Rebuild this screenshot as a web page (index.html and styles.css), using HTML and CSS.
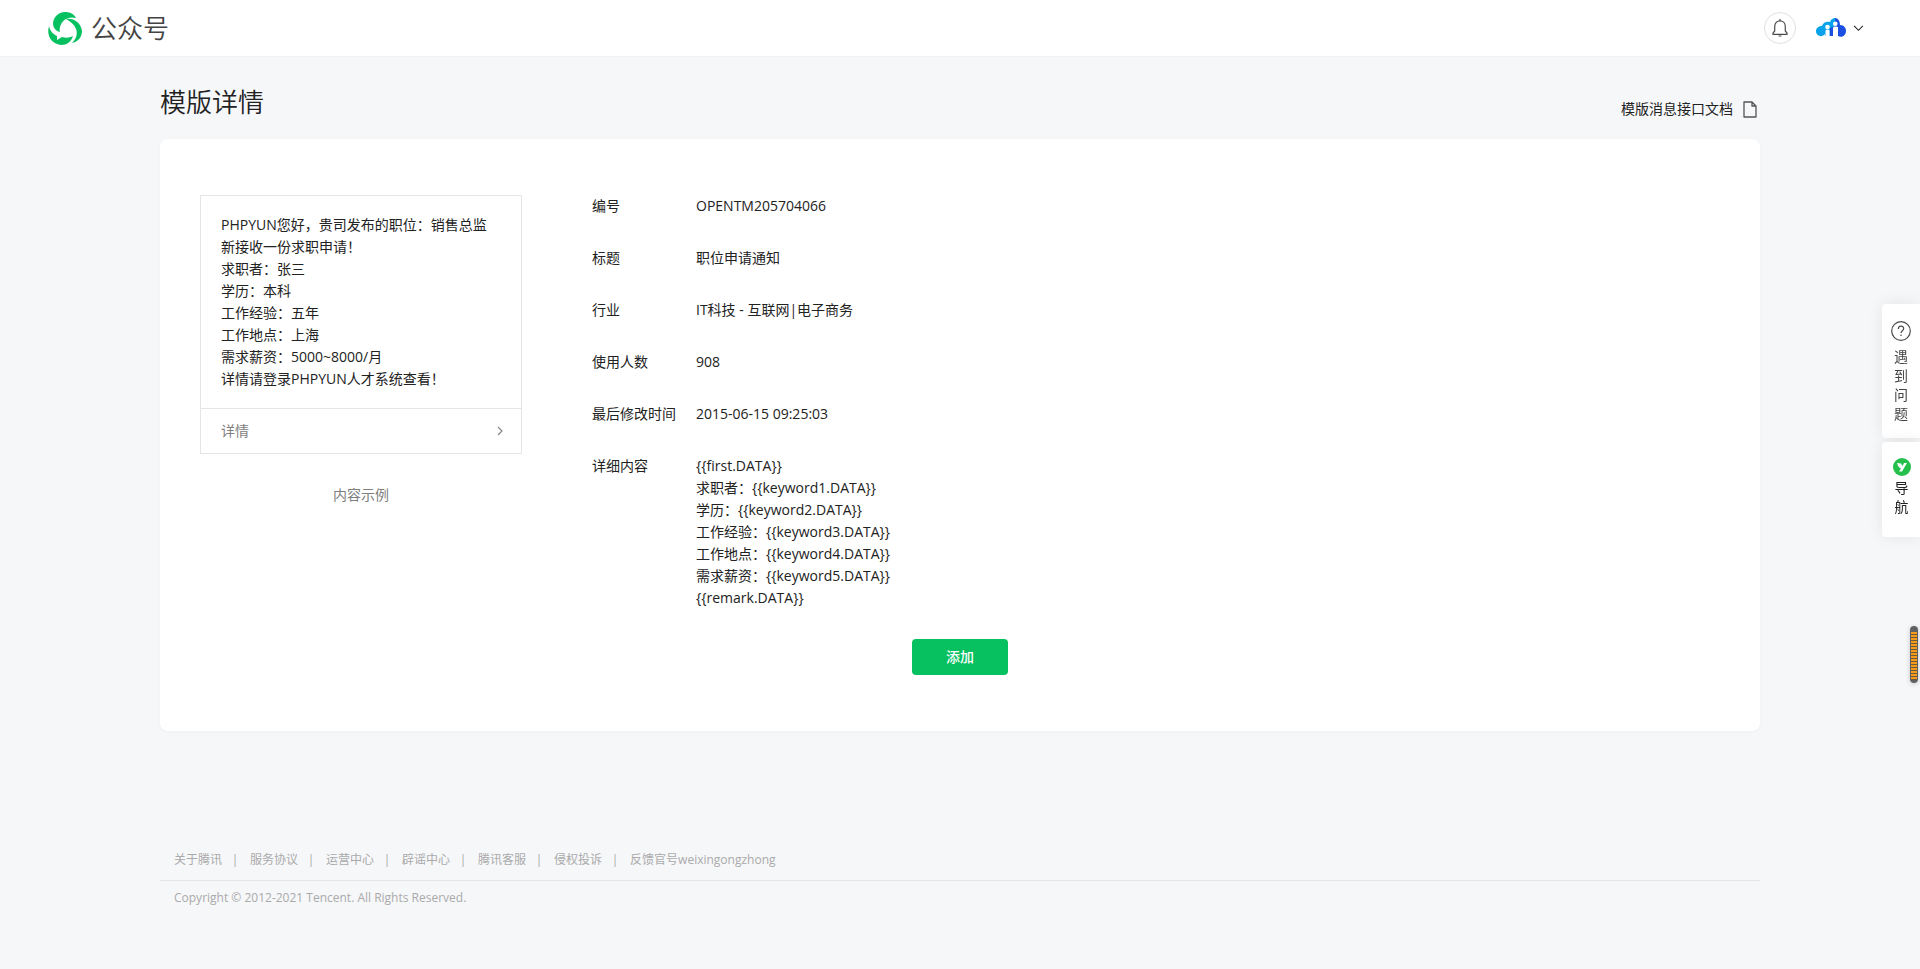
FILE: index.html
```html
<!DOCTYPE html>
<html lang="zh-CN">
<head>
<meta charset="utf-8">
<title>公众号 - 模版详情</title>
<link rel="stylesheet" href="styles.css">
</head>
<body>
<header class="topbar">
  <a class="brand" href="#">
    <svg class="brand-mark" viewBox="0 0 34 33" aria-hidden="true">
      <path fill="#07c160" d="M5 11C6 4 11 0 17 0c5 0 9 2 11 6C20 4 14 8 12 15c-.5 2-.4 3 0 5C8 19 5 16 5 11z"/>
      <path fill="#07c160" d="M18 7c8-1 15 4 16 12 0 6-4 11-10 12 4-4 6-9 4-14C26 12 22 9 18 7z"/>
      <path fill="#07c160" d="M1 14c1 5 4 8 8 10v4l5-3c4 1 7 1 11-1-2 6-6 9-12 9C4 32-2 24 1 14z"/>
    </svg>
    <span class="brand-name">公众号</span>
  </a>
  <div class="account">
    <button class="bell" aria-label="通知">
      <svg viewBox="0 0 16 18" aria-hidden="true"><path d="M1 15.300V14l1.700-2V7.500C2.700 4 5 1.800 8 1.800s5.300 2.200 5.300 5.700V12L15 14v1.300zM8 0v2M6.500 17h3" fill="none" stroke="#4a4a4a" stroke-width="1.200"/></svg>
    </button>
    <button class="profile" aria-label="账号">
      <svg class="avatar" viewBox="0 0 30 20" aria-hidden="true">
        <path fill="#0aa2ea" d="M6 8C7 4 11 3 14 4c1-3 3-4 5-4v9l-5 2v7H9v-2c-3 4-9 2-9-3 0-3 3-5 6-5z"/>
        <path fill="#1d50e0" d="M19 0c3 0 5 3 5 7 4 0 6 3 6 6 0 5-5 7-8 5V9l-5 1v8h-3v-8l5-2z"/>
        <path fill="#fff" d="M9.500 13c0-2 4-2 4 0v6h-4zM17 10c0-2 5-2 5 0v9h-5z"/>
        <circle cx="11.500" cy="9" r="2.300" fill="#fff"/><circle cx="19.300" cy="5.800" r="2.300" fill="#fff"/>
      </svg>
      <svg class="caret" viewBox="0 0 12 8" aria-hidden="true"><path d="M1 1l5 5 5-5" fill="none" stroke="#222" stroke-width="1.200"/></svg>
    </button>
  </div>
</header>

<main class="page">
  <div class="page-head">
    <h1>模版详情</h1>
    <a class="doc-link" href="#">模版消息接口文档
      <svg viewBox="0 0 14 17" aria-hidden="true"><path d="M1 1h8l4 4v11H1zM9 1v4h4" fill="none" stroke="#555" stroke-width="1.300" stroke-linejoin="round"/></svg>
    </a>
  </div>

  <section class="card">
    <div class="columns">
      <figure class="sample">
        <div class="message">
          <p class="message-body">PHPYUN您好，贵司发布的职位：销售总监新接收一份求职申请！<br>求职者：张三<br>学历：本科<br>工作经验：五年<br>工作地点：上海<br>需求薪资：5000~8000/月<br>详情请登录PHPYUN人才系统查看！</p>
          <a class="message-more" href="#">详情
            <svg viewBox="0 0 6 10" aria-hidden="true"><path d="M1 1l4 4-4 4" fill="none" stroke="#888" stroke-width="1.200"/></svg>
          </a>
        </div>
        <figcaption>内容示例</figcaption>
      </figure>
      <dl class="details">
        <dt>编号</dt><dd>OPENTM205704066</dd>
        <dt>标题</dt><dd>职位申请通知</dd>
        <dt>行业</dt><dd>IT科技 - 互联网|电子商务</dd>
        <dt>使用人数</dt><dd>908</dd>
        <dt>最后修改时间</dt><dd>2015-06-15 09:25:03</dd>
        <dt>详细内容</dt><dd>{{first.DATA}}<br>求职者：{{keyword1.DATA}}<br>学历：{{keyword2.DATA}}<br>工作经验：{{keyword3.DATA}}<br>工作地点：{{keyword4.DATA}}<br>需求薪资：{{keyword5.DATA}}<br>{{remark.DATA}}</dd>
      </dl>
    </div>
    <button class="primary">添加</button>
  </section>

  <footer class="footer">
    <nav class="footer-links">
      <a href="#">关于腾讯</a><a href="#">服务协议</a><a href="#">运营中心</a><a href="#">辟谣中心</a><a href="#">腾讯客服</a><a href="#">侵权投诉</a><a href="#">反馈官号weixingongzhong</a>
    </nav>
    <p class="copyright">Copyright © 2012-2021 Tencent. All Rights Reserved.</p>
  </footer>
</main>

<aside class="side">
  <a class="side-item help" href="#">
    <svg viewBox="0 0 20 20" aria-hidden="true"><circle cx="10" cy="10" r="9.300" fill="none" stroke="#4a4a4a" stroke-width="1.200"/><path d="M7.300 8c0-3.800 5.400-3.600 5.400-.4 0 2-2.700 2.200-2.700 4.400M10 13.500V15" fill="none" stroke="#4a4a4a" stroke-width="1.200"/></svg>
    <span>遇到问题</span>
  </a>
  <a class="side-item guide" href="#">
    <svg viewBox="0 0 18 18" aria-hidden="true"><circle cx="9" cy="9" r="9" fill="#24c04b"/><path d="M4 5l4 .5 1.500 2.500L11 5h3L9 13.500H6L8 10.500C6 10 5 8 4 5z" fill="#fff"/></svg>
    <span>导航</span>
  </a>
</aside>
<div class="gauge"></div>
</body>
</html>
```

FILE: styles.css
```css
* { box-sizing: border-box; }
body {
  margin: 0;
  background: #f6f7f9;
  color: #222;
  font: 14px/22px "Open Sans", "Noto Sans CJK SC", sans-serif;
}
a { color: inherit; text-decoration: none; }
button { font: inherit; cursor: pointer; }
h1, p, dl, dd, figure { margin: 0; }
svg { display: block; flex: none; overflow: visible; }

.topbar {
  display: flex;
  align-items: center;
  justify-content: space-between;
  height: 56px;
  padding: 0 56px 0 48px;
  background: #fff;
  box-shadow: 0 1px 0 #f2f2f2;
}
.brand { display: flex; align-items: center; gap: 9px; }
.brand-mark { width: 34px; height: 33px; }
.brand-name { color: #444; font-size: 26px; line-height: 32px; font-weight: 350; }
.account { display: flex; align-items: center; gap: 20px; }
.bell {
  display: grid;
  place-items: center;
  width: 32px;
  height: 32px;
  padding: 0;
  background: #fff;
  border: 1px solid #e0e0e0;
  border-radius: 50%;
}
.bell svg { width: 16px; height: 18px; }
.profile { display: flex; align-items: center; gap: 7px; padding: 0; background: none; border: 0; }
.avatar { width: 30px; height: 20px; }
.caret { width: 11px; height: 7px; }

.page { max-width: 1600px; margin: 0 auto; }
.page-head { display: flex; justify-content: space-between; padding: 28px 0 19px; }
.page-head h1 { font-size: 26px; line-height: 36px; font-weight: 350; }
.doc-link { display: flex; align-items: center; gap: 10px; padding: 14px 3px 0 0; }
.doc-link svg { width: 14px; height: 17px; }

.card {
  padding: 56px 40px;
  background: #fff;
  border-radius: 8px;
  box-shadow: 0 1px 4px rgba(0, 0, 0, .03);
}
.columns { display: flex; gap: 70px; }
.sample { width: 322px; }
.message { border: 1px solid #e4e5e7; }
.message-body { padding: 18px 28px 18px 20px; }
.message-more {
  display: flex;
  align-items: center;
  justify-content: space-between;
  height: 45px;
  padding: 0 18px 0 20px;
  border-top: 1px solid #e4e5e7;
  color: #808080;
}
.message-more svg { width: 6px; height: 10px; }
.sample figcaption { margin-top: 30px; color: #808080; text-align: center; }
.details { display: grid; flex: 1; grid-template-columns: 84px 1fr; gap: 30px 20px; }
.primary {
  display: block;
  width: 96px;
  height: 36px;
  margin: 30px auto 0;
  padding: 0;
  color: #fff;
  background: #07c160;
  border: 0;
  border-radius: 4px;
  font-weight: 500;
}

.footer { margin-top: 118px; color: #aaa; font-size: 12px; }
.footer-links { display: flex; padding: 0 14px 9px; border-bottom: 1px solid #e4e5e7; }
.footer-links a { display: flex; }
.footer-links a + a::before { content: "|"; width: 26px; padding-right: 2px; text-align: center; }
.copyright { padding: 6px 14px; }

.side {
  position: fixed;
  top: 304px;
  right: 0;
  display: grid;
  gap: 4px;
  width: 38px;
}
.side-item {
  display: grid;
  justify-items: center;
  gap: 6px;
  padding: 17px 9px 15px;
  background: #fff;
  border-radius: 4px 0 0 4px;
  box-shadow: 0 0 16px rgba(0, 0, 0, .08);
  line-height: 19px;
}
.side-item span { width: 14px; }
.help { color: #444; }
.help svg { width: 20px; height: 20px; }
.guide { gap: 2px; padding: 16px 8px 21px 9px; }
.guide svg { width: 18px; height: 18px; }
.gauge {
  position: fixed;
  top: 626px;
  right: 2px;
  width: 8px;
  height: 57px;
  border: 1px solid #606060;
  border-width: 6px 1px 3px;
  border-radius: 4px;
  background: repeating-linear-gradient(#f79a1c 0 2px, #6b5a3c 2px 3px);
  box-shadow: 0 1px 5px rgba(0, 0, 0, .2);
}
```
